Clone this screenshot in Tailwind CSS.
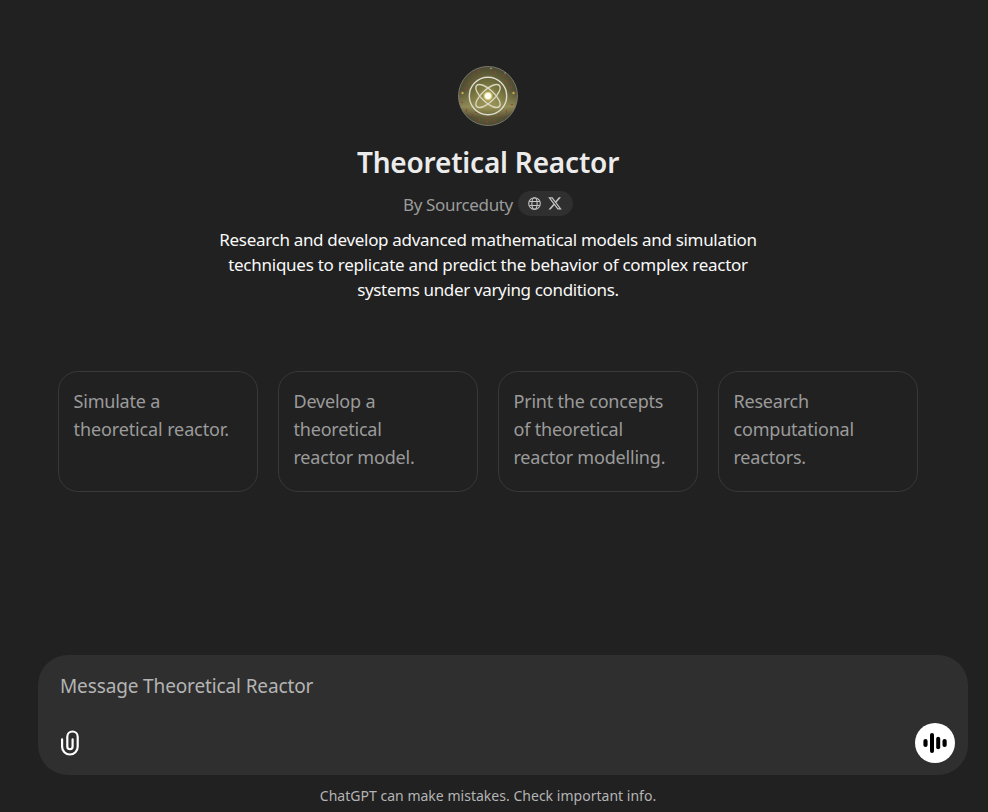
<!DOCTYPE html>
<html lang="en">
<head>
<meta charset="utf-8">
<title>Theoretical Reactor</title>
<script src="https://cdn.jsdelivr.net/npm/@tailwindcss/browser@4"></script>
</head>
<body class="h-[812px] w-[988px] overflow-hidden bg-[#212121] font-['Noto_Sans','Open_Sans',sans-serif] text-[#ececec]">
<div class="flex h-full flex-col">
  <header class="flex w-[976px] flex-col items-center pt-[66px]">
    <svg class="size-[60px]" viewBox="0 0 60 60" fill="none">
      <defs>
        <radialGradient id="base"><stop offset="0" stop-color="#98934f"/><stop offset=".5" stop-color="#6f6c3b"/><stop offset="1" stop-color="#4d4a33"/></radialGradient>
        <linearGradient id="band" x1="0" y1="0" x2="0" y2="1"><stop offset=".4" stop-color="#a29b5c" stop-opacity="0"/><stop offset=".68" stop-color="#a8a061" stop-opacity=".7"/><stop offset=".86" stop-color="#a29b5c" stop-opacity="0"/></linearGradient>
        <radialGradient id="glow"><stop offset="0" stop-color="#fff"/><stop offset=".45" stop-color="#fff7c5"/><stop offset="1" stop-color="#f6dc6c" stop-opacity="0"/></radialGradient>
      </defs>
      <circle cx="30" cy="30" r="29.5" fill="url(#base)"/>
      <circle cx="30" cy="30" r="29.5" fill="url(#band)" stroke="#77776b"/>
      <g fill="#8f4238" opacity=".85"><path d="M15 7h1v3h-1zM20 4h1v3h-1zM37 5h1v3h-1zM45 9h3v1h-3zM48 14h1v3h-1zM10 16h2v1h-2zM6 21h1v3h-1zM3 36h2v1H3zM8 43h1v3H8zM13 48h2v2h-2zM21 52h1v3h-1zM28 55h2v2h-2zM36 53h1v3h-1zM43 50h2v1h-2zM48 44h1v3h-1zM53 38h2v1h-2zM53 20h1v3h-1zM29 51h2v2h-2zM17 46h2v1h-2zM40 48h2v1h-2z"/></g>
      <g fill="#c9a850"><circle cx="4.5" cy="27" r="1.2"/><circle cx="55.5" cy="27" r="1.2"/></g>
      <g fill="#a3b0a5"><circle cx="33" cy="2.5" r=".8"/><circle cx="47" cy="7" r=".7"/></g>
      <circle cx="30" cy="30" r="18.7" stroke="#dedbd0" stroke-width="1.4"/>
      <g stroke="#dad6bf" stroke-width="1.4"><ellipse cx="30" cy="30" rx="15.5" ry="6.3" transform="rotate(43 30 30)"/><ellipse cx="30" cy="30" rx="15.5" ry="6.3" transform="rotate(-43 30 30)"/></g>
      <circle cx="30" cy="30" r="5.5" fill="url(#glow)"/><circle cx="30" cy="30" r="3" fill="#fffef2"/>
    </svg>
    <h1 class="mt-[16px] whitespace-nowrap text-[28px] font-semibold leading-[40px] tracking-[-0.2px]">Theoretical Reactor</h1>
    <div class="mt-[6px] flex h-[32px] items-center gap-[5px]">
      <span class="whitespace-nowrap text-[17px] leading-[25px] tracking-[-0.35px] text-[#9b9b9b]">By Sourceduty</span>
      <span class="-mt-[2px] flex h-[25px] w-[55px] items-center justify-center gap-[7px] rounded-full bg-[#2f2f2f] text-[#c4c4c4]">
        <svg class="size-[13px]" viewBox="0 0 13 13" fill="none" stroke="currentColor" stroke-width="1.1"><circle cx="6.5" cy="6.5" r="5.8"/><ellipse cx="6.5" cy="6.5" rx="2.6" ry="5.8"/><path d="M1.2 4.5h10.6M1.2 8.5h10.6"/></svg>
        <svg class="h-[13px] w-[14px]" viewBox="0 0 24 23" fill="currentColor"><path d="M18.9.5h3.68l-8.04 9.19L24 22.2h-7.41l-5.8-7.58-6.64 7.58H.47l8.6-9.83L0 .5h7.59l5.25 6.93zM17.61 20h2.04L6.49 2.58H4.3z"/></svg>
      </span>
    </div>
    <p class="flex flex-col items-center whitespace-nowrap pt-[7px] text-[17px] leading-[25px] text-[#f9f9f9]">
      <span class="tracking-[-0.31px]">Research and develop advanced mathematical models and simulation</span>
      <span class="tracking-[-0.26px]">techniques to replicate and predict the behavior of complex reactor</span>
      <span class="tracking-[-0.35px]">systems under varying conditions.</span>
    </p>
  </header>
  <main class="mt-[69px] flex gap-[20px] pl-[58px] text-[18px] leading-[28px] tracking-[-0.2px] text-[#9b9b9b]">
    <div class="h-[121px] w-[200px] whitespace-nowrap rounded-[20px] border border-[#383838] px-[14.5px] pt-[15px]">Simulate a<br><span class="tracking-[-0.12px]">theoretical reactor.</span></div>
    <div class="h-[121px] w-[200px] whitespace-nowrap rounded-[20px] border border-[#383838] px-[14.5px] pt-[15px]">Develop a<br>theoretical<br>reactor model.</div>
    <div class="h-[121px] w-[200px] whitespace-nowrap rounded-[20px] border border-[#383838] px-[14.5px] pt-[15px]">Print the concepts<br>of theoretical<br>reactor modelling.</div>
    <div class="h-[121px] w-[200px] whitespace-nowrap rounded-[20px] border border-[#383838] px-[14.5px] pt-[15px]">Research<br>computational<br>reactors.</div>
  </main>
  <section class="ml-[38px] mt-auto flex h-[120px] w-[930px] shrink-0 flex-col justify-between rounded-[30px] bg-[#2f2f2f] pb-[12px] pl-[22px] pr-[13px] pt-[17px]">
    <div class="whitespace-nowrap text-[19px] leading-[28px] tracking-[-0.13px] text-[#b4b4b4]">Message Theoretical Reactor</div>
    <div class="flex items-center justify-between">
      <svg class="h-[26px] w-[20px]" viewBox="0 0 20 26" fill="none" stroke="#fff" stroke-width="2.2" stroke-linecap="round"><path d="M2.1 9.4v7.3a7.8 7.8 0 0 0 15.6 0V6.7a5.2 5.2 0 0 0-10.4 0v9.9a2.65 2.65 0 0 0 5.3 0V9.4"/></svg>
      <button class="flex size-[40px] items-center justify-center rounded-full bg-white" aria-label="Voice mode">
        <svg class="size-[40px]" viewBox="0 0 40 40" fill="#000"><rect x="8.4" y="16" width="4.2" height="8" rx="2.1"/><rect x="15" y="10" width="4" height="20" rx="2"/><rect x="21.2" y="13.7" width="4" height="12.6" rx="2"/><rect x="27.5" y="16" width="4.2" height="8" rx="2.1"/></svg>
      </button>
    </div>
  </section>
  <footer class="flex h-[37px] w-[976px] shrink-0 justify-center whitespace-nowrap pt-[11px] text-[14px] leading-[20px] tracking-[0.02px] text-[#b4b4b4]">ChatGPT can make mistakes. Check important info.</footer>
</div>
</body>
</html>
